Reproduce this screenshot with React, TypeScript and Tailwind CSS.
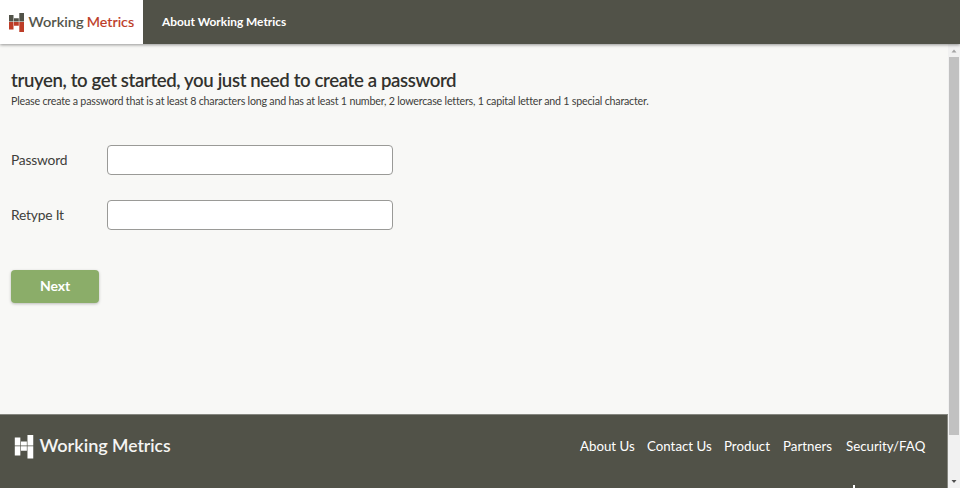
type LogoProps = {
  className: string;
  top: string;
  bottom: string;
  word: string;
  accent: string;
};

function Mark({ top, bottom }: { top: string; bottom: string }) {
  return (
    <>
      <path fill={top} d="M0 2h4.5v6.5H0zM5 5.2h4.8v3.3H5zM10.3 0H15v8.5h-4.7z" />
      <path fill={bottom} d="M0 9.1h4.5v7.4H0zM5 9.1h4.8v3.6H5zM10.3 9.1H15V19h-4.7z" />
    </>
  );
}

function HeaderLogo({ className, top, bottom, word, accent }: LogoProps) {
  return (
    <svg className={className} viewBox="0 0 126 22" role="img" aria-label="Working Metrics">
      <Mark top={top} bottom={bottom} />
      <g fontFamily="Lato, sans-serif" fontSize="14" fontWeight="500" strokeWidth="0.12">
        <text x="19.6" y="13.5" fill={word} stroke={word} textLength="55" lengthAdjust="spacingAndGlyphs">Working</text>
        <text x="77.8" y="13.5" fill={accent} stroke={accent} textLength="47.3" lengthAdjust="spacingAndGlyphs">Metrics</text>
      </g>
    </svg>
  );
}

function FooterLogo() {
  return (
    <svg className="h-[30px] w-[160px]" viewBox="0 0 160 30" role="img" aria-label="Working Metrics">
      <g transform="translate(0.8 0) scale(1.23 1.24)">
        <Mark top="#ffffff" bottom="#ffffff" />
      </g>
      <g fontFamily="Lato, sans-serif" fontSize="17" fontWeight="600" fill="#f5f5f3">
        <text x="25.4" y="16.7" textLength="68.5" lengthAdjust="spacingAndGlyphs">Working</text>
        <text x="98" y="16.7" textLength="58.7" lengthAdjust="spacingAndGlyphs">Metrics</text>
      </g>
    </svg>
  );
}

function Field({ label, id }: { label: string; id: string }) {
  return (
    <div className="flex h-[30px] items-center">
      <label htmlFor={id} className="w-24 text-[13.8px] tracking-[-0.2px] text-[#40403b]">{label}</label>
      <input
        id={id}
        type="password"
        className="h-[30px] w-[286.4px] rounded-[4px] border border-[#9a9a97] bg-white px-2 outline-none"
      />
    </div>
  );
}

const links = [
  { label: "About Us", width: "w-[67px]" },
  { label: "Contact Us", width: "w-[77px]" },
  { label: "Product", width: "w-[59px]" },
  { label: "Partners", width: "w-[63px]" },
  { label: "Security/FAQ", width: "w-[79px]" },
];

export default function App() {
  return (
    <div className="flex h-[488px] w-[960px] flex-col overflow-hidden bg-[#f8f8f6] font-['Lato',sans-serif] text-[#32322e]">
      <header className="z-10 flex h-11 shrink-0 bg-[#515248] shadow-[0_1px_3px_rgba(0,0,0,0.4)]">
        <div className="w-[143px] bg-white pl-[8.6px] pt-[13px]">
          <HeaderLogo className="h-[22px] w-[126px]" top="#515248" bottom="#bd3d28" word="#515248" accent="#bd3d28" />
        </div>
        <a href="#" className="pl-[19px] pt-[14px] text-[11.9px] leading-4 font-bold whitespace-nowrap text-white">
          About Working Metrics
        </a>
      </header>
      <div className="flex h-[444px]">
        <div className="flex w-[948px] flex-col">
          <main className="h-[370px] pl-[11px] pt-6">
            <h1 className="text-[18.6px] leading-6 font-semibold tracking-[-0.38px] whitespace-nowrap">
              truyen, to get started, you just need to create a password
            </h1>
            <p className="mt-px text-[10.7px] leading-4 tracking-[-0.213px] whitespace-nowrap text-[#40403b]">
              Please create a password that is at least 8 characters long and has at least 1 number, 2 lowercase letters, 1 capital letter and 1 special character.
            </p>
            <form className="mt-9">
              <Field label="Password" id="password" />
              <div className="h-[25px]" />
              <Field label="Retype It" id="retype" />
              <button
                type="button"
                className="mt-10 block h-[33px] w-[88px] rounded-[4px] bg-[#8bad69] pb-[2px] text-[14px] font-bold tracking-[-0.1px] text-white shadow-[0_1px_3px_rgba(0,0,0,0.25)]"
              >
                Next
              </button>
            </form>
          </main>
          <footer className="relative flex h-[74px] justify-between border-t border-r border-[#85867f] bg-[#515248] pl-[14px] pt-5">
            <FooterLogo />
            <nav className="flex h-6 items-center pr-[22px] text-[13.3px] whitespace-nowrap text-white">
              {links.map((link) => (
                <a key={link.label} href="#" className={link.width}>{link.label}</a>
              ))}
            </nav>
            <span className="absolute bottom-0 left-[853px] h-[3px] w-[2px] bg-white" />
          </footer>
        </div>
        <div className="flex w-3 flex-col items-center bg-[#f1f1f1]">
          <svg className="h-[13px] w-3" viewBox="0 0 12 13">
            <path d="M3.5 8.5h5L6 5.5z" fill="#a3a3a3" />
          </svg>
          <div className="h-[378px] w-[10px] bg-[#c1c1c1]" />
          <svg className="mt-auto h-[13px] w-3" viewBox="0 0 12 13">
            <path d="M3.5 5h5L6 8z" fill="#505050" />
          </svg>
        </div>
      </div>
    </div>
  );
}
